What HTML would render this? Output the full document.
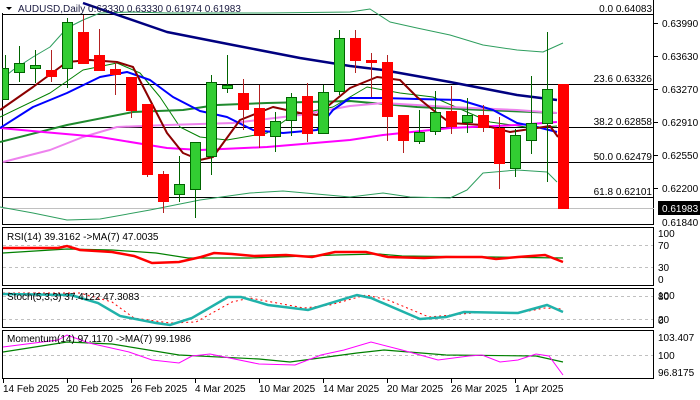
<!DOCTYPE html>
<html><head><meta charset="utf-8"><style>
html,body{margin:0;padding:0;background:#fff;}
svg{display:block;font-family:"Liberation Sans",sans-serif;}
</style></head><body>
<svg width="700" height="400" viewBox="0 0 700 400" xmlns="http://www.w3.org/2000/svg">
<rect width="700" height="400" fill="#fff"/>
<!-- main frame -->
<g fill="none" stroke="#000" stroke-width="1">
<line x1="2.5" y1="13" x2="2.5" y2="224.5"/>
<line x1="653.5" y1="0" x2="653.5" y2="224.5"/>
<line x1="2" y1="224.5" x2="654" y2="224.5"/>
<line x1="2" y1="14.5" x2="654" y2="14.5"/>
<line x1="2" y1="84.5" x2="654" y2="84.5"/>
<line x1="2" y1="127.5" x2="654" y2="127.5"/>
<line x1="2" y1="162.5" x2="654" y2="162.5"/>
<line x1="2" y1="197.5" x2="654" y2="197.5"/>
</g>
<line x1="2" y1="208.5" x2="654" y2="208.5" stroke="#c0c0c0"/>
<!-- fib labels -->
<g font-size="10" fill="#000" text-anchor="end">
<text x="652" y="12">0.0 0.64083</text>
<text x="652" y="82">23.6 0.63326</text>
<text x="652" y="125">38.2 0.62858</text>
<text x="652" y="160">50.0 0.62479</text>
<text x="652" y="195">61.8 0.62101</text>
</g>
<!-- MAs / bands -->
<g fill="none" stroke-linejoin="round">
<polyline stroke="#2e9e5e" stroke-width="1" points="3,78 13,70 33,57 50,47 67,28 83,20 100,13 133,12 167,13 267,13 350,12 370,9 390,22 417,28 450,35 483,45 517,50 543,52 563,43"/>
<polyline stroke="#2e9e5e" stroke-width="1" points="0,207 33,213 67,220 100,219 150,210 200,200 250,193 283,191 350,197 383,193 410,197 450,198 467,190 483,173 517,170 547,172 557,182"/>
<polyline stroke="#008000" stroke-width="1" points="0,117 50,93 83,70 117,63 140,73 160,97 180,127 200,137 227,140 267,133 293,115 333,107 367,87 400,93 433,97 467,112 490,122 533,128 557,126"/>
<polyline stroke="#1f8a2e" stroke-width="2" points="0,142 67,125 133,112 183,110 217,105 267,103 350,101 417,107 483,110 557,113"/>
<polyline stroke="#ee82ee" stroke-width="2" points="3,162 50,150 83,137 117,127 167,125 233,123 300,115 350,106 383,103 450,107 517,110 557,113"/>
<polyline stroke="#ff00ff" stroke-width="2" points="0,128 43,132 100,137 167,148 200,150 267,147 350,140 383,135 450,128 517,125 557,122"/>
<polyline stroke="#000080" stroke-width="2.5" points="83,3 167,32 233,45 300,58 350,66 383,70 450,82 517,95 557,100"/>
<polyline stroke="#0000ff" stroke-width="2" points="0,128 33,107 67,93 100,77 127,72 150,80 173,97 200,111 227,117 253,130 283,133 317,130 333,110 350,98 383,98 417,99 460,100 493,110 517,123 537,127 557,132"/>
<polyline stroke="#8b0000" stroke-width="2" points="0,110 33,87 67,62 90,60 117,62 133,67 150,100 167,133 183,153 200,160 213,157 240,120 273,107 300,113 317,115 350,88 377,77 400,80 417,97 433,110 450,123 483,125 510,132 537,128 550,126 558,137"/>
</g>
<!-- candles -->
<g id="c" stroke-width="1">
<!-- wicks -->
<g stroke="#006400">
<line x1="5.5" y1="55" x2="5.5" y2="99"/>
<line x1="19.5" y1="46" x2="19.5" y2="82"/>
<line x1="35.5" y1="50" x2="35.5" y2="83"/>
<line x1="67.5" y1="18" x2="67.5" y2="88"/>
<line x1="179.5" y1="156" x2="179.5" y2="202"/>
<line x1="195.5" y1="142" x2="195.5" y2="218"/>
<line x1="211.5" y1="75" x2="211.5" y2="175"/>
<line x1="227.5" y1="55" x2="227.5" y2="93"/>
<line x1="275.5" y1="112" x2="275.5" y2="152"/>
<line x1="291.5" y1="93" x2="291.5" y2="136"/>
<line x1="323.5" y1="85" x2="323.5" y2="134"/>
<line x1="339.5" y1="30" x2="339.5" y2="95"/>
<line x1="419.5" y1="110" x2="419.5" y2="144"/>
<line x1="435.5" y1="91" x2="435.5" y2="135"/>
<line x1="467.5" y1="98" x2="467.5" y2="133"/>
<line x1="515.5" y1="129" x2="515.5" y2="177"/>
<line x1="531.5" y1="76" x2="531.5" y2="154"/>
<line x1="547.5" y1="32" x2="547.5" y2="182"/>
</g>
<g stroke="#b22222">
<line x1="51.5" y1="50" x2="51.5" y2="82"/>
<line x1="83.5" y1="15" x2="83.5" y2="63"/>
<line x1="99.5" y1="29" x2="99.5" y2="70"/>
<line x1="115.5" y1="62" x2="115.5" y2="95"/>
<line x1="131.5" y1="77" x2="131.5" y2="118"/>
<line x1="147.5" y1="104" x2="147.5" y2="177"/>
<line x1="163.5" y1="171" x2="163.5" y2="213"/>
<line x1="243.5" y1="79" x2="243.5" y2="130"/>
<line x1="259.5" y1="85" x2="259.5" y2="148"/>
<line x1="307.5" y1="83" x2="307.5" y2="142"/>
<line x1="355.5" y1="30" x2="355.5" y2="73"/>
<line x1="371.5" y1="53" x2="371.5" y2="97"/>
<line x1="387.5" y1="55" x2="387.5" y2="141"/>
<line x1="403.5" y1="115" x2="403.5" y2="153"/>
<line x1="451.5" y1="86" x2="451.5" y2="134"/>
<line x1="483.5" y1="105" x2="483.5" y2="132"/>
<line x1="499.5" y1="117" x2="499.5" y2="189"/>
</g>
<!-- green bodies -->
<g fill="#32cd32" stroke="#006400">
<rect x="2.5" y="68.5" width="6" height="31"/>
<rect x="14.5" y="63.5" width="10" height="9"/>
<rect x="30.5" y="65.5" width="10" height="3"/>
<rect x="62.5" y="22.5" width="10" height="46"/>
<rect x="174.5" y="184.5" width="10" height="10"/>
<rect x="190.5" y="142.5" width="10" height="47"/>
<rect x="206.5" y="82.5" width="10" height="74"/>
<rect x="222.5" y="85.5" width="10" height="3"/>
<rect x="270.5" y="121.5" width="10" height="15"/>
<rect x="286.5" y="97.5" width="10" height="23"/>
<rect x="318.5" y="92.5" width="10" height="41"/>
<rect x="334.5" y="38.5" width="10" height="53"/>
<rect x="414.5" y="132.5" width="10" height="9"/>
<rect x="430.5" y="112.5" width="10" height="19"/>
<rect x="462.5" y="115.5" width="10" height="7"/>
<rect x="510.5" y="135.5" width="10" height="33"/>
<rect x="526.5" y="123.5" width="10" height="17"/>
<rect x="542.5" y="89.5" width="10" height="34"/>
</g>
<!-- red bodies -->
<g fill="#ff0000" stroke="#ff0000">
<rect x="46.5" y="70.5" width="10" height="6"/>
<rect x="78.5" y="32.5" width="10" height="31"/>
<rect x="94.5" y="55.5" width="10" height="15"/>
<rect x="110.5" y="69.5" width="10" height="5"/>
<rect x="126.5" y="77.5" width="10" height="33"/>
<rect x="142.5" y="104.5" width="10" height="70"/>
<rect x="158.5" y="174.5" width="10" height="27"/>
<rect x="238.5" y="93.5" width="10" height="16"/>
<rect x="254.5" y="108.5" width="10" height="27"/>
<rect x="302.5" y="96.5" width="10" height="37"/>
<rect x="350.5" y="38.5" width="10" height="22"/>
<rect x="366.5" y="60.5" width="10" height="2"/>
<rect x="382.5" y="62.5" width="10" height="54"/>
<rect x="398.5" y="115.5" width="10" height="25"/>
<rect x="446.5" y="111.5" width="10" height="15"/>
<rect x="478.5" y="115.5" width="10" height="12"/>
<rect x="494.5" y="128.5" width="10" height="35"/>
<rect x="558.5" y="84.5" width="10" height="124"/>
</g>
</g>
<!-- title -->
<rect x="3" y="3" width="270" height="10" fill="#fff" opacity="0"/>
<polygon points="6,7 12,7 9,10" fill="#000"/>
<text x="18" y="12" font-size="10" fill="#1a1a40">AUDUSD,Daily  0.63330 0.63330 0.61974 0.61983</text>
<!-- price axis -->
<g font-size="10" fill="#000">
<text x="662" y="27">0.63990</text>
<text x="662" y="60">0.63630</text>
<text x="662" y="93">0.63270</text>
<text x="662" y="126">0.62910</text>
<text x="662" y="159">0.62550</text>
<text x="662" y="192">0.62200</text>
<text x="662" y="226">0.61840</text>
</g>
<g stroke="#000"><line x1="654" y1="23.5" x2="658" y2="23.5"/><line x1="654" y1="56.5" x2="658" y2="56.5"/><line x1="654" y1="89.5" x2="658" y2="89.5"/><line x1="654" y1="122.5" x2="658" y2="122.5"/><line x1="654" y1="155.5" x2="658" y2="155.5"/><line x1="654" y1="188.5" x2="658" y2="188.5"/></g>
<rect x="658" y="201" width="42" height="14" fill="#000"/>
<text x="662" y="212" font-size="10" fill="#fff">0.61983</text>
<!-- sub panels -->
<g fill="none" stroke="#000">
<rect x="2.5" y="227.5" width="651" height="58"/>
<rect x="2.5" y="288.5" width="651" height="39"/>
<rect x="2.5" y="330.5" width="651" height="48"/>
</g>
<g stroke="#c0c0c0" stroke-dasharray="3,3">
<line x1="3" y1="245.5" x2="653" y2="245.5"/>
<line x1="3" y1="267.5" x2="653" y2="267.5"/>
<line x1="3" y1="296.5" x2="653" y2="296.5"/>
<line x1="3" y1="319.5" x2="653" y2="319.5"/>
<line x1="3" y1="355.5" x2="653" y2="355.5"/>
</g>
<!-- RSI -->
<polyline fill="none" stroke="#008000" stroke-width="1.2" points="3,253 67,249 112,250 156,253 188,258 250,258 335,255 379,254 402,256 491,257 563,258"/>
<polyline fill="none" stroke="#ff0000" stroke-width="2.5" points="3,248 58,248 67,246 80,250 112,252 134,256 152,263 179,262 201,257 214,253 232,254 254,256 286,255 312,257 335,252 366,252 388,257 424,258 446,257 482,257 496,259 518,257 545,255 563,262"/>
<!-- Stoch -->
<polyline fill="none" stroke="#ff0000" stroke-width="1" stroke-dasharray="2,3" points="3,293 80,293 112,302 134,318 170,323 196,322 232,302 250,298 304,308 330,305 366,295 388,300 429,317 473,313 518,313 545,308 563,309"/>
<polyline fill="none" stroke="#20b2aa" stroke-width="2.5" points="3,294 71,295 98,303 120,316 156,323 170,325 192,318 228,297 241,297 268,305 308,310 357,295 371,298 420,319 446,317 464,312 518,313 547,305 563,312"/>
<!-- Momentum -->
<polyline fill="none" stroke="#008000" stroke-width="1.2" points="3,352 67,342 112,344 179,355 259,359 290,362 357,353 384,350 446,355 536,356 563,362"/>
<polyline fill="none" stroke="#ff00ff" stroke-width="1" points="3,347 58,340 67,335 89,343 129,352 152,360 179,363 192,356 210,354 259,364 295,365 321,355 344,350 371,342 402,350 438,360 469,356 482,355 500,362 518,360 536,354 549,356 563,375"/>
<!-- panel labels -->
<g font-size="10" fill="#000">
<text x="7" y="240">RSI(14) 39.3162  -&gt;MA(7) 47.0035</text>
<text x="7" y="300">Stoch(5,3,3) 37.4122 47.3083</text>
<text x="7" y="342">Momentum(14) 97.1170  -&gt;MA(7) 99.1986</text>
<text x="658" y="237">100</text>
<text x="658" y="249">70</text>
<text x="658" y="271">30</text>
<text x="658" y="283">0</text>
<text x="658" y="299">100</text>
<text x="658" y="300">80</text>
<text x="658" y="323">20</text>
<text x="658" y="324">0</text>
<text x="658" y="341">103.407</text>
<text x="658" y="359">100</text>
<text x="658" y="376">96.8175</text>
</g>
<!-- dates -->
<g stroke="#000"><line x1="3.5" y1="379" x2="3.5" y2="383"/><line x1="67.5" y1="379" x2="67.5" y2="383"/><line x1="131.5" y1="379" x2="131.5" y2="383"/><line x1="195.5" y1="379" x2="195.5" y2="383"/><line x1="259.5" y1="379" x2="259.5" y2="383"/><line x1="323.5" y1="379" x2="323.5" y2="383"/><line x1="387.5" y1="379" x2="387.5" y2="383"/><line x1="451.5" y1="379" x2="451.5" y2="383"/><line x1="515.5" y1="379" x2="515.5" y2="383"/></g>
<g font-size="10" fill="#000">
<text x="3" y="392">14 Feb 2025</text>
<text x="67" y="392">20 Feb 2025</text>
<text x="131" y="392">26 Feb 2025</text>
<text x="195" y="392">4 Mar 2025</text>
<text x="259" y="392">10 Mar 2025</text>
<text x="323" y="392">14 Mar 2025</text>
<text x="387" y="392">20 Mar 2025</text>
<text x="451" y="392">26 Mar 2025</text>
<text x="515" y="392">1 Apr 2025</text>
</g>
</svg>
</body></html>
